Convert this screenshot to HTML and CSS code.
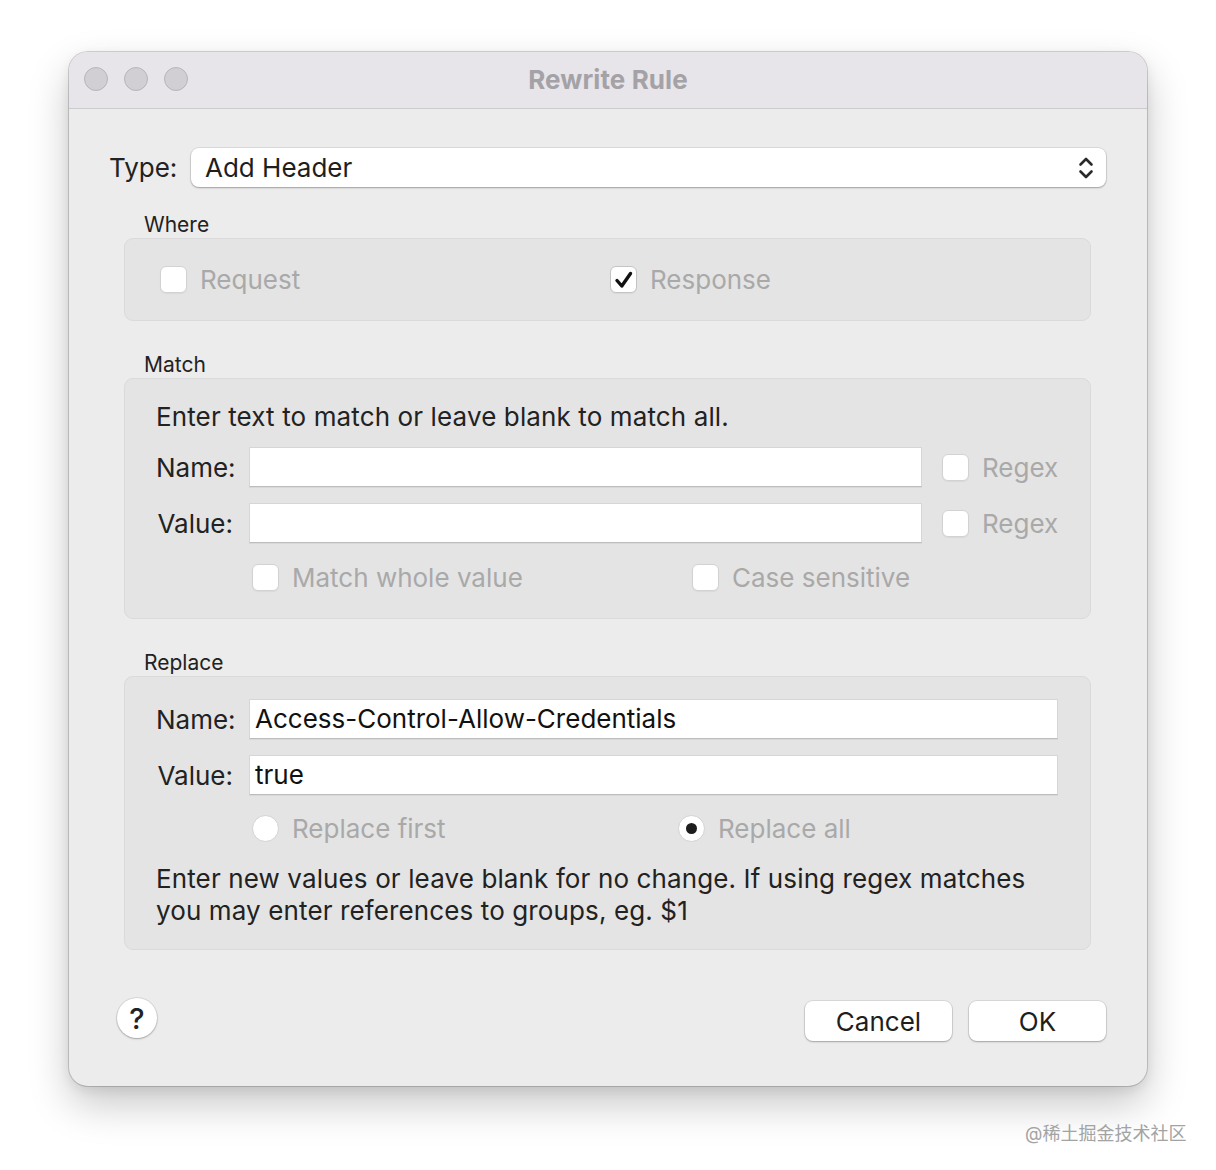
FILE: index.html
```html
<!DOCTYPE html>
<html>
<head>
<meta charset="utf-8">
<link rel="stylesheet" href="styles.css">
</head>
<body>
<div class="page">
  <div class="window">
    <div class="titlebar">
      <div class="lights"><span></span><span></span><span></span></div>
      <div class="title">Rewrite Rule</div>
      <div></div>
    </div>
    <div class="content">
      <div class="type-row">
        <div class="type-label">Type:</div>
        <div class="select">
          <span>Add Header</span>
          <svg class="chev" width="16" height="24" viewBox="0 0 16 24"><path d="M2.5 8.5 L8 3 L13.5 8.5 M2.5 15.5 L8 21 L13.5 15.5" fill="none" stroke="#2a2a2a" stroke-width="2.6" stroke-linecap="round" stroke-linejoin="round"/></svg>
        </div>
      </div>

      <div class="section first">
        <div class="section-title">Where</div>
        <div class="box where-box">
          <div class="check-item w450"><span class="cb"></span><span class="dis">Request</span></div>
          <div class="check-item"><span class="cb checked"><svg width="22" height="22" viewBox="0 0 22 22"><path d="M4 11.5 L8.8 17 L17.5 4.5" fill="none" stroke="#111" stroke-width="3.4" stroke-linecap="round" stroke-linejoin="round"/></svg></span><span class="dis">Response</span></div>
        </div>
      </div>

      <div class="section">
        <div class="section-title">Match</div>
        <div class="box match-box">
          <div class="para one">Enter text to match or leave blank to match all.</div>
          <div class="field-row">
            <div class="flabel">Name:</div>
            <div class="input"></div>
            <div class="check-item regex"><span class="cb"></span><span class="dis">Regex</span></div>
          </div>
          <div class="field-row">
            <div class="flabel">Value:</div>
            <div class="input"></div>
            <div class="check-item regex"><span class="cb"></span><span class="dis">Regex</span></div>
          </div>
          <div class="opt-row">
            <div class="check-item w440"><span class="cb"></span><span class="dis">Match whole value</span></div>
            <div class="check-item"><span class="cb"></span><span class="dis">Case sensitive</span></div>
          </div>
        </div>
      </div>

      <div class="section">
        <div class="section-title">Replace</div>
        <div class="box replace-box">
          <div class="field-row first-field">
            <div class="flabel">Name:</div>
            <div class="input">Access-Control-Allow-Credentials</div>
          </div>
          <div class="field-row">
            <div class="flabel">Value:</div>
            <div class="input">true</div>
          </div>
          <div class="opt-row radios">
            <div class="check-item w426"><span class="rb"></span><span class="dis">Replace first</span></div>
            <div class="check-item"><span class="rb on"></span><span class="dis">Replace all</span></div>
          </div>
          <div class="para two">Enter new values or leave blank for no change. If using regex matches you may enter references to groups, eg. $1</div>
        </div>
      </div>
    </div>
    <div class="footer">
      <div class="help">?</div>
      <div class="buttons">
        <div class="btn cancel">Cancel</div>
        <div class="btn ok">OK</div>
      </div>
    </div>
  </div>
  <div class="watermark">@稀土掘金技术社区</div>
</div>
</body>
</html>
```

FILE: styles.css
```css
* { box-sizing: border-box; }
html, body { margin: 0; padding: 0; background: #fff; }
body {
  font-family: "Inter", "Noto Sans CJK SC", sans-serif;
  color: #222;
}
.page {
  position: relative;
  width: 1216px;
  height: 1170px;
  padding: 52px 0 0 69px;
}
.window {
  width: 1078px;
  background: #ececec;
  border-radius: 19px;
  overflow: hidden;
  box-shadow: 0 0 0 1px rgba(0,0,0,0.16), 0 18px 40px rgba(0,0,0,0.22), 0 4px 12px rgba(0,0,0,0.08);
}
.titlebar {
  height: 57px;
  padding-bottom: 2px;
  background: #e7e5e9;
  border-bottom: 1px solid #cbcacc;
  display: grid;
  grid-template-columns: 1fr auto 1fr;
  align-items: center;
}
.lights {
  display: flex;
  gap: 16px;
  padding-left: 15px;
}
.lights span {
  width: 24px;
  height: 24px;
  border-radius: 50%;
  background: #d1cfd3;
  border: 1px solid #b7b5b9;
}
.title {
  font-size: 26px;
  font-weight: 700;
  color: #a4a2a6;
  letter-spacing: 0.1px;
}
.content {
  padding: 39px 41px 0 40px;
}
.type-row {
  display: flex;
  align-items: center;
  height: 39px;
}
.type-label {
  width: 82px;
  font-size: 26px;
}
.select {
  flex: 1;
  height: 39px;
  background: #fff;
  border-radius: 8px;
  box-shadow: 0 0 0 1px rgba(0,0,0,0.07), 0 1px 2px rgba(0,0,0,0.28);
  display: flex;
  align-items: center;
  justify-content: space-between;
  padding: 0 12px 0 14px;
  font-size: 26px;
  color: #1e1e1e;
}
.chev { display: block; }
.section {
  margin: 30px 15px 0 15px;
}
.section.first { margin-top: 24px; }
.section-title {
  font-size: 21px;
  line-height: 26px;
  padding-top: 1px;
  padding-left: 20px;
  color: #222;
}
.box {
  background: #e4e4e4;
  border: 1px solid #dadada;
  border-radius: 9px;
}
.where-box {
  height: 83px;
  display: flex;
  align-items: center;
  padding-left: 35px;
}
.check-item {
  display: flex;
  align-items: center;
  gap: 13px;
  font-size: 26px;
}
.w450 { width: 450px; }
.w440 { width: 440px; }
.w426 { width: 426px; }
.dis { color: #a9a9a9; }
.cb {
  width: 27px;
  height: 27px;
  border-radius: 6px;
  background: #fff;
  border: 1px solid #d2d2d2;
  box-shadow: 0 1px 1px rgba(0,0,0,0.05);
  display: flex;
  align-items: center;
  justify-content: center;
  flex: none;
}
.cb.checked { border-color: #c4c4c4; }
.rb {
  width: 27px;
  height: 27px;
  border-radius: 50%;
  background: #fff;
  border: 1px solid #d2d2d2;
  flex: none;
  display: flex;
  align-items: center;
  justify-content: center;
}
.rb.on::after {
  content: "";
  width: 11px;
  height: 11px;
  border-radius: 50%;
  background: #1d1d1d;
}
.match-box {
  padding: 22px 32px 23px 31px;
}
.replace-box {
  padding: 22px 32px 22px 31px;
}
.para {
  font-size: 26px;
  line-height: 32px;
  letter-spacing: 0.12px;
  color: #222;
}
.para.one { margin-bottom: 14px; }
.para.two { margin-top: 17px; padding-right: 20px; }
.field-row {
  display: flex;
  align-items: center;
  height: 40px;
  margin-bottom: 16px;
}
.flabel {
  width: 77px;
  text-align: right;
  font-size: 26px;
  margin-right: 16px;
  flex: none;
}
.input {
  flex: 1;
  height: 40px;
  background: #fff;
  border: 1px solid #d6d6d6;
  border-bottom-color: #bdbdbd;
  box-shadow: 0 1px 0 rgba(0,0,0,0.05);
  font-size: 26px;
  line-height: 38px;
  padding-left: 5px;
  color: #111;
}
.regex {
  width: 116px;
  margin-left: 20px;
  flex: none;
}
.opt-row {
  display: flex;
  align-items: center;
  height: 36px;
  margin-left: 96px;
}
.opt-row.radios { margin-top: -1px; }
.footer {
  display: flex;
  justify-content: space-between;
  align-items: flex-start;
  padding: 48px 41px 45px 48px;
}
.help {
  width: 40px;
  height: 40px;
  border-radius: 50%;
  background: #fff;
  box-shadow: 0 0 0 1px rgba(0,0,0,0.08), 0 1px 2px rgba(0,0,0,0.25);
  display: flex;
  align-items: center;
  justify-content: center;
  font-size: 29px;
  font-weight: 500;
  color: #222;
}
.buttons {
  display: flex;
  gap: 17px;
  margin-top: 3px;
}
.btn {
  height: 40px;
  background: #fff;
  border-radius: 8px;
  box-shadow: 0 0 0 1px rgba(0,0,0,0.08), 0 1px 2px rgba(0,0,0,0.25);
  display: flex;
  align-items: center;
  justify-content: center;
  font-size: 26px;
  color: #1e1e1e;
}
.cancel { width: 147px; }
.ok { width: 137px; }
.watermark {
  position: absolute;
  left: 1025px;
  top: 1119px;
  font-size: 18px;
  color: #a3a3a3;
}
```
